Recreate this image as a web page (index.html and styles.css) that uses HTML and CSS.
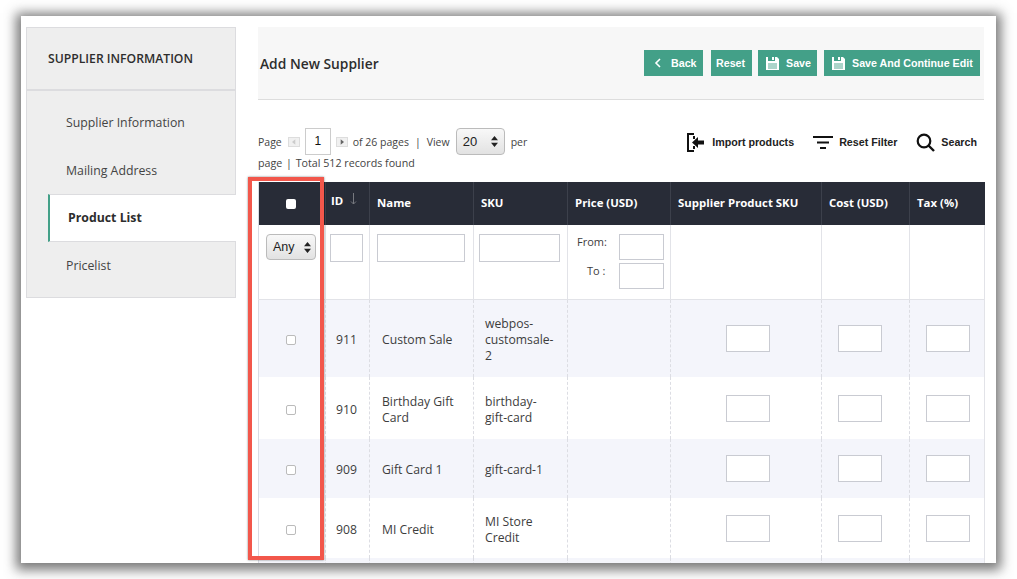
FILE: index.html
```html
<!DOCTYPE html>
<html lang="en">
<head>
<meta charset="utf-8">
<title>Add New Supplier</title>
<link rel="stylesheet" href="styles.css">
</head>
<body>
<div class="window">
  <aside class="sidebar">
    <h2 class="side-title">SUPPLIER INFORMATION</h2>
    <ul class="side-list">
      <li class="side-item">Supplier Information</li>
      <li class="side-item">Mailing Address</li>
      <li class="side-item active">Product List</li>
      <li class="side-item">Pricelist</li>
    </ul>
  </aside>
  <main class="main">
    <header class="page-head">
      <h1 class="page-title">Add New Supplier</h1>
      <div class="actions">
        <button class="btn btn-back"><svg class="chev" viewBox="0 0 8 10"><path d="M6 1 2 5l4 4" fill="none" stroke="#fff" stroke-width="1.6"/></svg>Back</button>
        <button class="btn plain">Reset</button>
        <button class="btn btn-save"><svg class="disk" viewBox="0 0 15 15"><path d="M1 1h2v4h7V1h2l2 2v11H1z" fill="#fff"/><path d="M7 1h2v3H7z" fill="#fff"/><path d="M3 8h9M3 10h9M3 12h9" stroke="#43a088" stroke-width=".9"/></svg>Save</button>
        <button class="btn btn-cont"><svg class="disk" viewBox="0 0 15 15"><path d="M1 1h2v4h7V1h2l2 2v11H1z" fill="#fff"/><path d="M7 1h2v3H7z" fill="#fff"/><path d="M3 8h9M3 10h9M3 12h9" stroke="#43a088" stroke-width=".9"/></svg>Save And Continue Edit</button>
      </div>
    </header>
    <section class="toolbar">
      <div class="pager">
        <div class="pager-line">
          <span>Page</span>
          <span class="arrow off"><svg viewBox="0 0 6 6"><path d="M4 1 1.5 3 4 5z" fill="#ccc"/></svg></span>
          <span class="page-num">1</span>
          <span class="arrow"><svg viewBox="0 0 6 6"><path d="M2 1 4.5 3 2 5z" fill="#666"/></svg></span>
          <span>of 26 pages</span>
          <span class="pipe">|</span>
          <span>View</span>
          <span class="select view-select">20<svg class="updown" viewBox="0 0 7 11"><path d="M3.500 0 7 4.300H0zM3.500 11 0 6.700h7z" fill="#222"/></svg></span>
          <span class="per">per</span>
        </div>
        <div class="pager-second">page <span class="pipe-b">|</span> Total 512 records found</div>
      </div>
      <div class="tools">
        <span class="tool tool-import"><svg class="ic-import" viewBox="0 0 18 19"><path d="M7 1H1v17h6" fill="none" stroke="#111" stroke-width="2"/><path d="M7 3v3M7 13v3" stroke="#111" stroke-width="2"/><path d="M17 7.500h-6V4L5 9.500l6 5.500v-3.500h6z" fill="#111"/></svg>Import products</span>
        <span class="tool tool-reset"><svg class="ic-filter" viewBox="0 0 20 13"><path d="M0 1h20M4 6.500h12M7 12h6" stroke="#111" stroke-width="2"/></svg>Reset Filter</span>
        <span class="tool tool-search"><svg class="ic-search" viewBox="0 0 19 19"><circle cx="8" cy="8" r="6.300" fill="none" stroke="#111" stroke-width="2.200"/><path d="M12.500 12.500 18 18" stroke="#111" stroke-width="2.400"/></svg>Search</span>
      </div>
    </section>
    <table class="grid">
      <colgroup>
        <col class="c1"><col class="c2"><col class="c3"><col class="c4"><col class="c5"><col class="c6"><col class="c7"><col class="c8">
      </colgroup>
      <thead>
        <tr class="head">
          <th class="center"><span class="head-check"></span></th>
          <th class="id-th">ID<svg class="sort" viewBox="0 0 7 12"><path d="M3.500 0v11M1 8.500 3.500 11 6 8.500" fill="none" stroke="#77797f" stroke-width="1"/></svg></th>
          <th>Name</th><th>SKU</th><th>Price (USD)</th><th>Supplier Product SKU</th><th>Cost (USD)</th><th>Tax (%)</th>
        </tr>
        <tr class="filter">
          <td class="f-any"><span class="select any-select">Any<svg class="updown" viewBox="0 0 7 11"><path d="M3.500 0 7 4.300H0zM3.500 11 0 6.700h7z" fill="#222"/></svg></span></td>
          <td><span class="box b-id"></span></td>
          <td><span class="box b-name"></span></td>
          <td><span class="box b-sku"></span></td>
          <td>
            <div class="range"><span>From:</span><span class="box b-price"></span></div>
            <div class="range"><span class="to">To :</span><span class="box b-price"></span></div>
          </td>
          <td></td><td></td><td></td>
        </tr>
      </thead>
      <tbody>
        <tr class="row r1 shade">
          <td class="center"><span class="check"></span></td><td class="num">911</td><td class="name">Custom Sale</td><td class="sku">webpos-customsale-2</td><td></td>
          <td><span class="box cell-box wide"></span></td><td><span class="box cell-box"></span></td><td><span class="box cell-box"></span></td>
        </tr>
        <tr class="row r2">
          <td class="center"><span class="check"></span></td><td class="num">910</td><td class="name">Birthday Gift Card</td><td class="sku">birthday-gift-card</td><td></td>
          <td><span class="box cell-box wide"></span></td><td><span class="box cell-box"></span></td><td><span class="box cell-box"></span></td>
        </tr>
        <tr class="row r3 shade">
          <td class="center"><span class="check"></span></td><td class="num">909</td><td class="name">Gift Card 1</td><td class="sku">gift-card-1</td><td></td>
          <td><span class="box cell-box wide"></span></td><td><span class="box cell-box"></span></td><td><span class="box cell-box"></span></td>
        </tr>
        <tr class="row r4">
          <td class="center"><span class="check"></span></td><td class="num">908</td><td class="name">MI Credit</td><td class="sku">MI Store Credit</td><td></td>
          <td><span class="box cell-box wide"></span></td><td><span class="box cell-box"></span></td><td><span class="box cell-box"></span></td>
        </tr>
        <tr class="row r5 shade"><td></td><td></td><td></td><td></td><td></td><td></td><td></td><td></td></tr>
      </tbody>
    </table>
    <div class="highlight"></div>
  </main>
</div>
</body>
</html>
```

FILE: styles.css
```css
* { box-sizing: border-box; }
html, body { margin: 0; height: 579px; overflow: hidden; background: #fff; }
body { padding: 16px 21px; font-family: "Open Sans", sans-serif; color: #3d3d3d; }
.window {
  width: 975px; height: 547px; background: #fff; overflow: hidden;
  display: flex; align-items: flex-start; padding: 11px 12px 0 5px;
  box-shadow: 0 2px 11px 5px rgba(70, 70, 70, .72);
}
.sidebar { width: 210px; height: 271px; flex: none; background: #eee; border: 1px solid #dcdcdf; }
.side-title { margin: 0; height: 63px; padding-left: 21px; border-bottom: 2px solid #dcdcdf; font-size: 12.200px; line-height: 61px; font-weight: 600; color: #2d2d2d; }
.side-list { list-style: none; margin: 0 0 0 21px; padding: 8px 0 0; }
.side-item { height: 47.500px; padding-left: 18px; line-height: 48px; font-size: 12.300px; color: #444; }
.side-item.active { background: #fff; border-left: 2px solid #43a088; border-top: 1px solid #dcdcdf; border-bottom: 1px solid #dcdcdf; font-weight: 700; padding-left: 18px; line-height: 46px; color: #2d2d2d; margin-right: -1px; }
.main { position: relative; width: 726px; flex: none; margin-left: 22px; }
.page-head { height: 73px; display: flex; align-items: center; justify-content: space-between; background: #f7f7f7; border-bottom: 1px solid #ddd; padding: 0 4px 0 2px; }
.page-title { margin: 0; font-size: 13.800px; font-weight: 600; color: #2d2d2d; }
.actions { display: flex; }
.btn { height: 26px; display: flex; align-items: center; background: #43a088; color: #fff; border: 0; font-family: "Liberation Sans", sans-serif; font-size: 10.700px; font-weight: 700; white-space: nowrap; }
.btn-back { width: 59px; padding: 0 0 0 10px; margin-right: 8px; }
.btn.plain { width: 41px; padding: 0 0 0 5px; margin-right: 6px; }
.btn-save { width: 59px; padding: 0 0 0 7px; margin-right: 7px; }
.btn-cont { width: 156px; padding: 0 0 0 7px; }
.chev { width: 8px; height: 10px; margin-right: 9px; }
.disk { width: 15px; height: 15px; margin-right: 6px; }
.toolbar { display: flex; justify-content: space-between; height: 82px; }
.pager { width: 290px; font-size: 10.700px; color: #444; }
.pager-line { display: flex; align-items: center; padding-top: 28px; height: 55px; font-size: 10.500px; }
.arrow { width: 12px; height: 10px; margin: 0 5px 0 6px; display: flex; background: #f0f0f0; border: 1px solid #ddd; }
.arrow svg { width: 100%; }
.arrow:not(.off) { margin: 0 5px; }
.page-num { width: 26px; height: 27px; border: 1px solid #ccc; text-align: center; line-height: 25px; font-family: "Liberation Sans", sans-serif; font-size: 12px; color: #111; }
.pipe { margin: 0 6px; }
.select { display: inline-flex; align-items: center; justify-content: space-between; border: 1px solid #bbb; border-radius: 4px; background: linear-gradient(#f8f8f8, #e2e2e2); font-family: "Liberation Sans", sans-serif; font-size: 13px; color: #222; }
.view-select { width: 49px; height: 27px; padding: 0 6px; margin-left: 6px; }
.per { margin-left: 6px; }
.updown { width: 7px; height: 11px; }
.pager-second { line-height: 17px; }
.pipe-b { margin: 0 1px; }
.tools { display: flex; padding-top: 31px; height: 60px; font-family: "Liberation Sans", sans-serif; font-size: 10.700px; font-weight: 700; color: #222; }
.tool { display: flex; align-items: center; height: 22px; }
.tool-import { margin-right: 19px; }
.tool-reset { margin-right: 19px; }
.tool-search { margin-right: 7px; }
.ic-import { width: 18px; height: 19px; margin-right: 7px; }
.ic-filter { width: 20px; height: 13px; margin-right: 6px; }
.ic-search { width: 19px; height: 19px; margin-right: 6px; }
.grid { width: 726px; table-layout: fixed; border-collapse: collapse; border-left: 1px solid #d9dbe3; font-size: 12px; color: #3d3d3d; }
.c1 { width: 67px; } .c2 { width: 44px; } .c3 { width: 104px; } .c4 { width: 94px; }
.c5 { width: 103px; } .c6 { width: 151px; } .c7 { width: 88px; } .c8 { width: 75px; }
.head { height: 43px; background: #282c37; color: #fff; }
.head th { text-align: left; padding: 0 7px 2px; font-size: 11.400px; font-weight: 700; border-left: 1px solid #3c404b; white-space: nowrap; }
.head th:first-child { border-left: 0; padding-right: 9px; }
.head .center { text-align: center; }
.head .id-th { padding: 0 0 6px 5px; }
.sort { width: 7px; height: 12px; margin-left: 7px; }
.head-check { display: inline-block; width: 10px; height: 10px; background: #fff; border-radius: 2px; vertical-align: middle; }
.filter { height: 74px; }
.filter td { vertical-align: top; padding: 9px 4px 0 7px; border-left: 1px solid #e2e3e8; border-bottom: 1px solid #e2e3e8; font-size: 11px; }
.filter td:first-child { border-left: 0; }
.filter td:last-child { border-right: 1px solid #e2e3e8; }
.box { display: block; background: #fff; border: 1px solid #c9cbd2; }
.b-id { width: 33px; height: 28px; margin-left: -3px; }
.b-name { width: 88px; height: 28px; }
.b-sku { width: 81px; height: 28px; margin-left: -2px; }
.b-price { width: 45px; height: 26px; flex: none; }
.range { display: flex; justify-content: space-between; height: 29px; padding: 0 2px; line-height: 16px; }
.to { margin-left: 10px; }
.any-select { width: 50px; height: 26px; padding: 0 4px 0 6px; font-size: 12.500px; }
.row td { padding: 3px 7px 0; border-left: 1px dashed #dcdde3; line-height: 16px; font-size: 12.200px; }
.row td:first-child { border-left: 0; padding: 2px 9px 0 7px; }
.row td:last-child { border-right: 1px solid #e2e3e8; }
.shade { background: #f4f5fb; }
.r1 { height: 78px; } .r2 { height: 62px; } .r3 { height: 59px; } .r4 { height: 60px; } .r5 { height: 12px; }
.center { text-align: center; }
.row .num { padding-left: 10px; }
.row .name { padding-left: 12px; padding-right: 12px; }
.row .sku { padding-left: 11px; padding-right: 12px; }
.check { display: inline-block; width: 10px; height: 10px; border: 1px solid #bbb; border-radius: 2px; background: #fff; vertical-align: middle; }
.cell-box { width: 44px; height: 27px; margin: -3px 0 0 9px; }
.cell-box.wide { margin-left: 48px; }
.highlight { position: absolute; left: -10px; top: 150px; width: 76px; height: 383px; border: 4px solid #f2574b; box-shadow: 0 0 2px rgba(0, 0, 0, .5); pointer-events: none; }
```
